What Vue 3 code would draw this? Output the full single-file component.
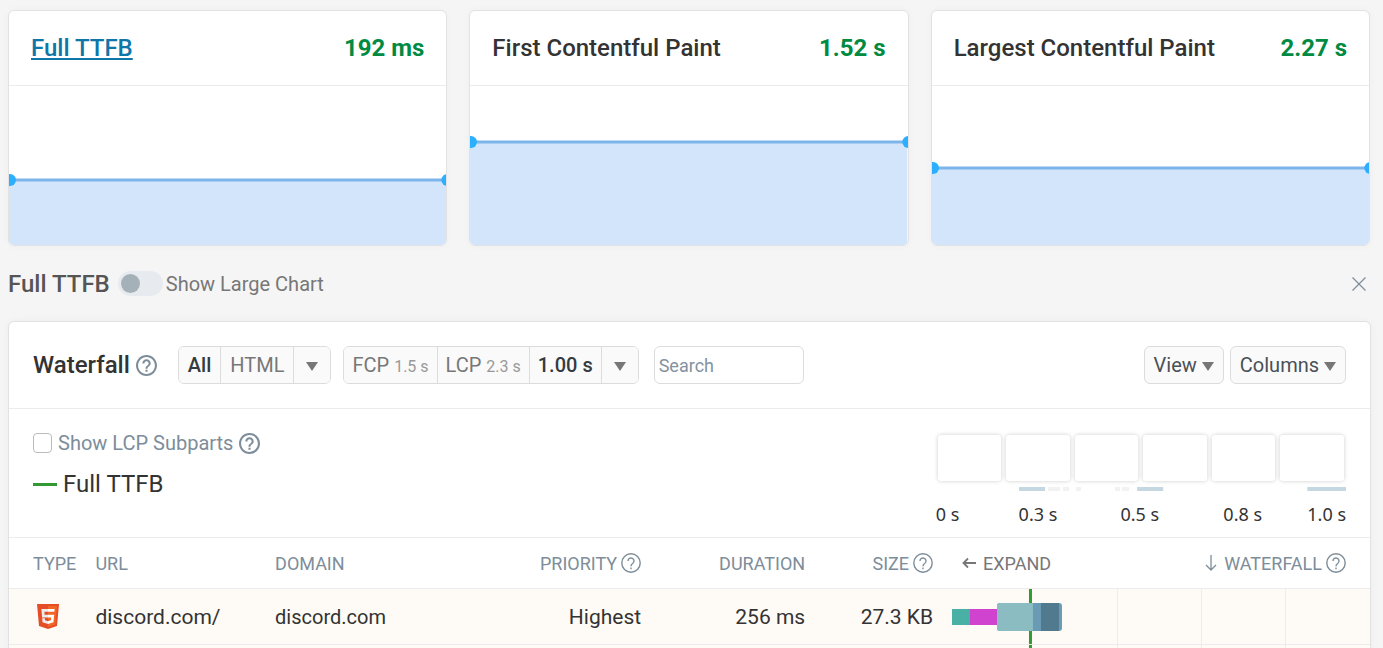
<template>
  <main class="page">
    <section class="cards">
      <article v-for="metric in metrics" :key="metric.name" class="card">
        <header class="card-header">
          <h2>
            <a v-if="metric.link" href="#ttfb">{{ metric.name }}</a>
            <template v-else>{{ metric.name }}</template>
          </h2>
          <strong>{{ metric.value }}</strong>
        </header>
        <svg class="card-chart" aria-hidden="true">
          <rect x="0" :y="metric.level" width="100%" height="100%" fill="#d3e5fa" />
          <g transform="translate(1 0)">
            <line x1="-1" :y1="metric.level" x2="100%" :y2="metric.level" stroke="#7cb5ec" stroke-width="3" />
            <circle cx="0" :cy="metric.level" r="6" fill="#2caffe" />
            <circle cx="100%" :cy="metric.level" r="6" fill="#2caffe" />
          </g>
        </svg>
      </article>
    </section>

    <section id="ttfb" class="chart-bar">
      <h2>Full TTFB</h2>
      <label class="toggle">
        <input v-model="largeChart" type="checkbox" />
        <span>Show Large Chart</span>
      </label>
      <button class="close" aria-label="Close">
        <svg width="14" height="14" viewBox="0 0 14 14">
          <path d="M.5.5l13 13M13.5.5l-13 13" stroke="#7d8d9a" stroke-width="1.2" />
        </svg>
      </button>
    </section>

    <section class="panel">
      <header class="toolbar">
        <h2>Waterfall</h2>
        <svg class="help" viewBox="2 2 20 20"><path :d="helpPath" /></svg>
        <div class="group filter">
          <button class="active">All</button>
          <button>HTML</button>
          <button aria-label="More types"><i class="caret"></i></button>
        </div>
        <div class="group times">
          <button>FCP <small>1.5 s</small></button>
          <button>LCP <small>2.3 s</small></button>
          <button class="active">1.00 s</button>
          <button aria-label="More times"><i class="caret"></i></button>
        </div>
        <input v-model="search" class="search" type="search" placeholder="Search" aria-label="Search" />
        <div class="menus">
          <button>View <i class="caret"></i></button>
          <button>Columns <i class="caret"></i></button>
        </div>
      </header>

      <div class="overview">
        <div class="legend">
          <div class="subparts">
            <label><input v-model="subparts" type="checkbox" /><span>Show LCP Subparts</span></label>
            <svg class="help" viewBox="2 2 20 20"><path :d="helpPath" /></svg>
          </div>
          <div class="legend-item"><i></i>Full TTFB</div>
        </div>
        <div class="timeline">
          <div class="frames">
            <span v-for="n in 6" :key="n" class="frame"></span>
          </div>
          <svg class="activity" viewBox="0 0 410 5" preserveAspectRatio="none" aria-hidden="true">
            <rect v-for="bar in activity" :key="bar.x" :x="bar.x" y="0" :width="bar.w" height="4" :fill="bar.busy ? '#c5d7e1' : '#f2f2f2'" />
          </svg>
          <div class="ticks">
            <span v-for="tick in ticks" :key="tick">{{ tick }}</span>
          </div>
        </div>
      </div>

      <table>
        <colgroup>
          <col v-for="width in columns" :key="width" :style="{ width: width + '%' }" />
        </colgroup>
        <thead>
          <tr>
            <th class="type">Type</th>
            <th>URL</th>
            <th>Domain</th>
            <th class="num"><span class="with-help">Priority <HelpIcon /></span></th>
            <th class="num">Duration</th>
            <th class="num"><span class="with-help">Size <HelpIcon /></span></th>
            <th>
              <div class="waterfall-head">
                <button class="expand">
                  <svg width="14" height="12" viewBox="0 0 14 12" fill="none" stroke="currentColor" stroke-width="1.8">
                    <path d="M14 6H1.5M6 1.5L1.5 6 6 10.5" />
                  </svg>
                  Expand
                </button>
                <button class="sort">
                  <svg width="12" height="18" viewBox="0 0 12 18" fill="none" stroke="currentColor" stroke-width="1.3">
                    <path d="M6 1v15M1 11l5 5 5-5" />
                  </svg>
                  Waterfall
                </button>
                <HelpIcon />
              </div>
            </th>
          </tr>
        </thead>
        <tbody>
          <tr v-for="request in requests" :key="request.url">
            <td class="type">
              <svg class="html5" viewBox="0 0 22 25" role="img" aria-label="HTML">
                <path fill="#e44d26" d="M0 0h22l-2 22-9 3-9-3z" />
                <path fill="#f16529" d="M11 2h9l-1.700 18.600L11 23z" />
                <path fill="#ebebeb" d="M11 5H4.400l.7 8.500H11v-2.700H7.600l-.2-3.100H11zM11 17.200l-3-.9-.2-2H5.200l.3 4L11 20z" />
                <path fill="#fff" d="M11 5v2.700h6.400l.2-2.700zM11 10.800v2.700h3.200l-.3 2.800-2.900.9V20l5.400-1.700.8-7.500z" />
              </svg>
            </td>
            <td class="url">{{ request.url }}</td>
            <td>{{ request.domain }}</td>
            <td class="num">{{ request.priority }}</td>
            <td class="num">{{ request.duration }}</td>
            <td class="num">{{ request.size }}</td>
            <td class="bars">
              <svg viewBox="0 0 437 55" preserveAspectRatio="none" aria-hidden="true">
                <path d="M184.500 0v55M268.500 0v55M352.500 0v55" stroke="#ececec" />
                <rect x="96" y="0" width="3" height="55" fill="#339933" />
                <rect x="19" y="20" width="18" height="16" fill="#48b0a5" />
                <rect x="37" y="20" width="28" height="16" fill="#cf43cf" />
                <rect x="64" y="14" width="65" height="28" rx="3" fill="#699bb5" />
                <path d="M67 14h33v28H67q-3 0-3-3V17q0-3 3-3z" fill="#8abcc2" />
                <rect x="108" y="14" width="18" height="28" fill="#527a8f" />
              </svg>
            </td>
          </tr>
          <tr class="next">
            <td colspan="6"></td>
            <td class="bars">
              <svg viewBox="0 0 437 55" preserveAspectRatio="none" aria-hidden="true">
                <path d="M184.500 0v55M268.500 0v55M352.500 0v55" stroke="#ececec" />
                <rect x="96" y="0" width="3" height="55" fill="#339933" />
              </svg>
            </td>
          </tr>
        </tbody>
      </table>
    </section>
  </main>
</template>

<script setup>
import { h, ref } from "vue";

const largeChart = ref(false);
const subparts = ref(false);
const search = ref("");

// level is the distance of the line from the top of the chart
const metrics = [
  { name: "Full TTFB", value: "192 ms", level: 94, link: true },
  { name: "First Contentful Paint", value: "1.52 s", level: 56 },
  { name: "Largest Contentful Paint", value: "2.27 s", level: 82 },
];

const activity = [
  { x: 83, w: 26, busy: true },
  { x: 112, w: 12 },
  { x: 127, w: 6 },
  { x: 140, w: 5 },
  { x: 179, w: 5 },
  { x: 186, w: 7 },
  { x: 201, w: 26, busy: true },
  { x: 371, w: 39, busy: true },
];
const ticks = ["0 s", "0.3 s", "0.5 s", "0.8 s", "1.0 s"];

// column widths in percent of the table
const columns = [6.35, 13.2, 11, 15.9, 12.05, 9.4, 32.1];

const requests = [
  { url: "discord.com/", domain: "discord.com", priority: "Highest", duration: "256 ms", size: "27.3 KB" },
];

const helpPath =
  "M11 18h2v-2h-2v2zm1-16C6.480 2 2 6.480 2 12s4.480 10 10 10 10-4.480 10-10S17.520 2 12 2zm0 18c-4.410 0-8-3.590-8-8s3.590-8 8-8 8 3.590 8 8-3.590 8-8 8zm0-14c-2.210 0-4 1.790-4 4h2c0-1.100.9-2 2-2s2 .9 2 2c0 2-3 1.750-3 5h2c0-2.250 3-2.500 3-5 0-2.210-1.790-4-4-4z";

const HelpIcon = () =>
  h("svg", { width: 20, height: 20, viewBox: "0 0 20 20", fill: "none", stroke: "currentColor", "stroke-width": 1.4 }, [
    h("circle", { cx: 10, cy: 10, r: 9.2 }),
    h("path", { d: "M7 8a3 3 0 1 1 4.600 2.500Q10 11.500 10 13.200" }),
    h("path", { d: "M10 14.600v1.600" }),
  ]);
</script>

<style>
body {
  background: #f5f5f5;
}
</style>

<style scoped>
.page {
  height: 100vh;
  overflow: hidden;
  box-sizing: border-box;
  padding: 10px 12px 0 8px;
  font-family: Roboto, "Liberation Sans", sans-serif;
  font-size: 20px;
  color: #333;
}
h2 {
  margin: 0;
  font-size: 24px;
  font-weight: 500;
  line-height: 28px;
}
button,
input {
  font: inherit;
  margin: 0;
}
button {
  color: inherit;
  cursor: pointer;
}
svg {
  display: block;
  flex: none;
}
.cards {
  display: grid;
  grid-template-columns: repeat(3, 1fr);
  gap: 22px;
  padding-right: 1px;
}
.card {
  border: 1px solid #e2e2e2;
  border-radius: 6px;
  background: #fff;
  overflow: hidden;
  box-shadow: 0 0 8px rgba(0, 0, 0, 0.03);
}
.card-header {
  display: flex;
  justify-content: space-between;
  align-items: center;
  height: 74px;
  padding: 0 22px;
  border-bottom: 1px solid #ececec;
}
.card-header strong {
  font-size: 24px;
  font-weight: 700;
  color: #018a42;
}
.card-header a {
  color: #0e76a8;
  text-decoration: underline 2px;
  text-underline-offset: 2px;
  text-decoration-skip-ink: none;
}
.card-chart {
  width: 100%;
  height: 159px;
}
.chart-bar {
  display: flex;
  align-items: center;
  height: 75px;
  color: #555;
}
.toggle {
  display: flex;
  align-items: center;
  gap: 3px;
  margin-left: 8px;
  color: #777;
}
.toggle input {
  appearance: none;
  width: 45px;
  height: 25px;
  padding: 3px;
  border-radius: 13px;
  background: #e7ebf0;
}
.toggle input::before {
  content: "";
  display: block;
  width: 19px;
  height: 19px;
  border-radius: 50%;
  background: #a5b1b9;
}
.toggle input:checked::before {
  margin-left: 20px;
}
.close {
  margin-left: auto;
  padding: 5px;
  border: 0;
  background: none;
}
.panel {
  border: 1px solid #e2e2e2;
  border-radius: 6px;
  background: #fff;
  overflow: hidden;
  box-shadow: 0 0 8px rgba(0, 0, 0, 0.04);
}
.toolbar {
  display: flex;
  align-items: center;
  height: 86px;
  padding: 0 24px;
  border-bottom: 1px solid #ececec;
}
.help {
  width: 21px;
  height: 21px;
  margin-left: 6px;
  fill: #7d8d9a;
}
.group {
  display: flex;
  margin-left: 12px;
  border: 1px solid #dcdcdc;
  border-radius: 6px;
  overflow: hidden;
}
.filter {
  margin-left: 21px;
}
.group button {
  height: 36px;
  padding: 0 9px;
  border: 0;
  border-right: 1px solid #dcdcdc;
  background: #fafafa;
  color: #777;
}
.times button {
  padding: 0 8px;
}
.group button:last-child {
  padding: 0 12px;
  border-right: 0;
}
.group .active {
  color: #343a40;
  font-weight: 500;
}
.group small {
  font-size: 16px;
  color: #999;
}
.caret {
  display: inline-block;
  vertical-align: middle;
  border: 6px solid transparent;
  border-top: 9px solid #777;
  border-bottom: 0;
}
.search {
  width: 150px;
  height: 38px;
  box-sizing: border-box;
  margin-left: 15px;
  padding: 0 4px;
  border: 1px solid #dcdcdc;
  border-radius: 6px;
  font-size: 18px;
}
.search::placeholder {
  color: #8492a0;
}
.menus {
  display: flex;
  gap: 6px;
  margin-left: auto;
}
.menus button {
  height: 38px;
  padding: 0 9px;
  border: 1px solid #dcdcdc;
  border-radius: 6px;
  background: #fafafa;
  color: #495057;
}
.overview {
  display: flex;
  justify-content: space-between;
  height: 128px;
  padding: 0 24px;
  border-bottom: 1px solid #ececec;
}
.legend {
  padding-top: 22px;
}
.subparts {
  display: flex;
  align-items: center;
  height: 24px;
  color: #7d8d9a;
}
.subparts label {
  display: flex;
  align-items: center;
  gap: 6px;
}
.subparts input {
  appearance: none;
  width: 19px;
  height: 20px;
  border: 1px solid #bbb;
  border-radius: 4px;
  background: #fff;
}
.subparts input:checked {
  background: #7d8d9a;
}
.legend-item {
  display: flex;
  align-items: center;
  gap: 6px;
  margin-top: 14px;
  font-size: 24px;
  line-height: 30px;
}
.legend-item i {
  width: 24px;
  height: 3px;
  background: #339933;
}
.timeline {
  width: 31.25%;
  padding-top: 26px;
}
.frames {
  display: grid;
  grid-template-columns: repeat(6, 1fr);
  gap: 5px;
  padding: 0 2px;
}
.frame {
  height: 46px;
  border-radius: 3px;
  background: #fff;
  box-shadow: 0 0 4px rgba(0, 0, 0, 0.2);
}
.activity {
  width: 100%;
  height: 5px;
  margin-top: 6px;
}
.ticks {
  display: grid;
  grid-template-columns: 83fr 102fr 103fr 84fr 38fr;
  margin-top: 10px;
  font-family: "Noto Sans", sans-serif;
  font-size: 18px;
  line-height: 24px;
  white-space: nowrap;
}
table {
  width: 100%;
  table-layout: fixed;
  border-collapse: separate;
  border-spacing: 0;
}
th,
td {
  box-sizing: border-box;
  padding: 0;
  text-align: left;
  white-space: nowrap;
  border-bottom: 1px solid #ececec;
}
th {
  height: 51px;
  font-size: 18px;
  font-weight: 400;
  text-transform: uppercase;
  color: #7d8d9a;
}
td {
  height: 56px;
  background: #fefaf5;
}
.url,
td.num {
  font-size: 21px;
}
.type {
  padding-left: 24px;
}
.num {
  text-align: right;
}
.with-help {
  display: inline-flex;
  align-items: center;
  gap: 4px;
}
.html5 {
  width: 22px;
  height: 25px;
  margin-left: 4px;
}
.bars svg {
  width: 100%;
  height: 55px;
}
.waterfall-head {
  display: flex;
  align-items: center;
  padding: 0 24px 0 29px;
}
.waterfall-head button {
  display: flex;
  align-items: center;
  gap: 7px;
  padding: 0;
  border: 0;
  background: none;
  text-transform: uppercase;
}
.expand {
  color: #777;
}
.sort {
  margin-left: auto;
  margin-right: 4px;
}
</style>
